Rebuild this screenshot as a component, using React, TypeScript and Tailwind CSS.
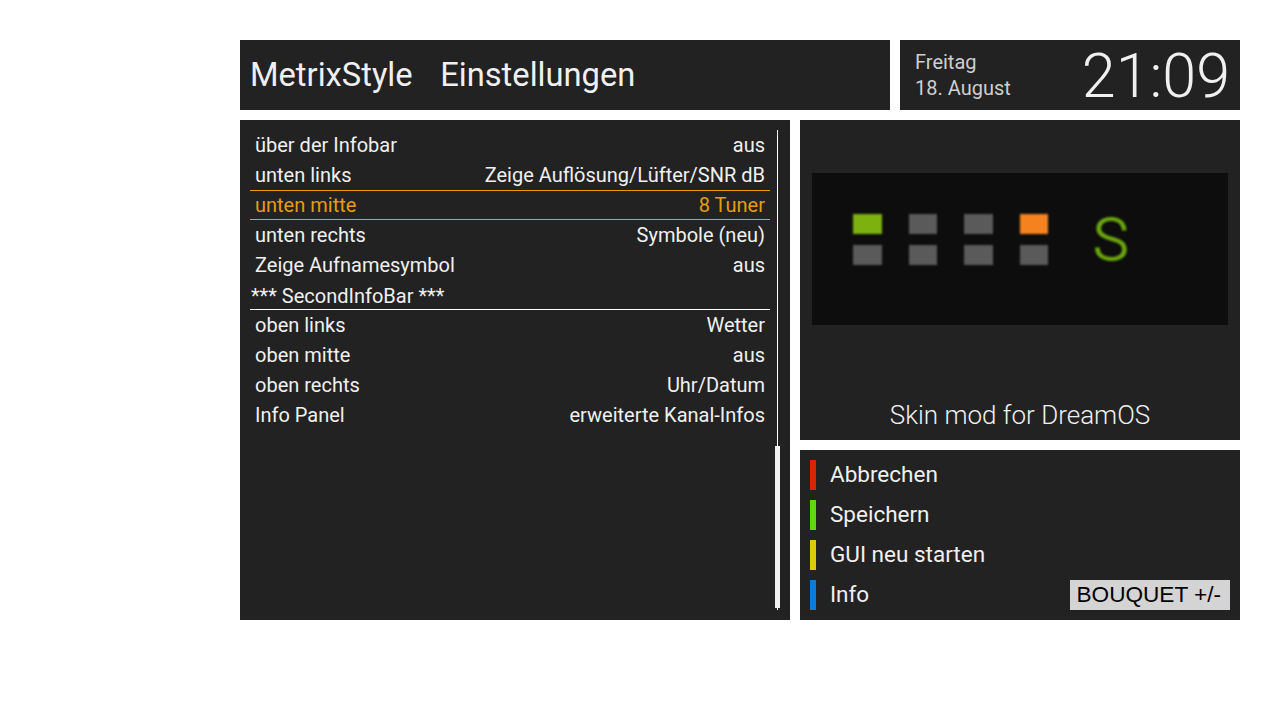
const ROWS: { label: string; value?: string; kind?: "selected" | "header" }[] = [
  { label: "über der Infobar", value: "aus" },
  { label: "unten links", value: "Zeige Auflösung/Lüfter/SNR dB" },
  { label: "unten mitte", value: "8 Tuner", kind: "selected" },
  { label: "unten rechts", value: "Symbole (neu)" },
  { label: "Zeige Aufnamesymbol", value: "aus" },
  { label: "*** SecondInfoBar ***", kind: "header" },
  { label: "oben links", value: "Wetter" },
  { label: "oben mitte", value: "aus" },
  { label: "oben rechts", value: "Uhr/Datum" },
  { label: "Info Panel", value: "erweiterte Kanal-Infos" },
];

const BUTTONS = [
  { color: "bg-[#dc2208]", label: "Abbrechen" },
  { color: "bg-[#62d80a]", label: "Speichern" },
  { color: "bg-[#dccc08]", label: "GUI neu starten" },
  { color: "bg-[#0c7cd8]", label: "Info" },
];

function Led({ color }: { color: string }) {
  return <div className={`h-[20px] w-[28.5px] blur-[1px] ${color}`} />;
}

export default function App() {
  return (
    <div className="flex h-[720px] w-[1280px] flex-col gap-[10px] bg-white pl-[240px] pr-[40px] pt-[40px] font-['Roboto',sans-serif] text-[#f0f0f0]">
      <div className="flex h-[70px] gap-[10px]">
        <div className="flex w-[650px] items-center gap-[27.5px] bg-[#222222] pl-[10px] pt-[2px] text-[32.7px] font-normal">
          <span>MetrixStyle</span>
          <span>Einstellungen</span>
        </div>
        <div className="flex w-[340px] items-center justify-between bg-[#222222] pl-[15px] pr-[10px]">
          <div className="text-[20px] leading-[26px] text-[#cfcfcf]">
            <div>Freitag</div>
            <div>18. August</div>
          </div>
          <div className="pt-[2px] text-[61px] font-light leading-none">21:09</div>
        </div>
      </div>

      <div className="flex gap-[10px]">
        <div className="flex h-[500px] w-[550px] bg-[#222222] pl-[10px] pr-[10px] pt-[10px]">
          <div className="w-[520px] shrink-0 text-[20px]">
            {ROWS.map((row) => {
              if (row.kind === "header") {
                return (
                  <div key={row.label} className="flex h-[30px] items-center border-b border-white pl-px pt-[2px]">
                    {row.label}
                  </div>
                );
              }
              const selected = row.kind === "selected";
              return (
                <div
                  key={row.label}
                  className={`flex h-[30px] items-center justify-between px-[5px] ${
                    selected ? "border-y border-y-[#e59d0e] text-[#e59d0e]" : ""
                  }`}
                >
                  <span>{row.label}</span>
                  <span>{row.value}</span>
                </div>
              );
            })}
          </div>
          <div className="ml-[5px] flex h-[480px] w-[5px] shrink-0 flex-col items-center">
            <div className="h-[316px] w-px bg-white" />
            <div className="h-[162px] w-[5px] bg-[#f0f0f0]" />
            <div className="h-[2px] w-px bg-white" />
          </div>
        </div>

        <div className="flex w-[440px] flex-col gap-[10px]">
          <div className="flex h-[320px] flex-col bg-[#222222]">
            <div className="ml-[12px] mt-[53px] flex h-[152px] w-[416px] bg-[#0d0d0d] pl-[41px] pt-[41px]">
              <div className="grid grid-cols-4 grid-rows-2 gap-x-[27px] gap-y-[10.7px] self-start">
                <Led color="bg-[#7cb10f]" />
                <Led color="bg-[#5a5a5a]" />
                <Led color="bg-[#5a5a5a]" />
                <Led color="bg-[#f5821e]" />
                <Led color="bg-[#5a5a5a]" />
                <Led color="bg-[#5a5a5a]" />
                <Led color="bg-[#5a5a5a]" />
                <Led color="bg-[#5a5a5a]" />
              </div>
              <span className="ml-[45px] mt-[-9px] h-fit text-[60px] font-light leading-[70px] text-[#6da80f] blur-[1px] [-webkit-text-stroke:1px_#6da80f]">S</span>
            </div>
            <div className="mt-[75px] text-center text-[26px] font-light leading-[30px]">Skin mod for DreamOS</div>
          </div>

          <div className="flex h-[170px] items-end justify-between bg-[#222222] pb-[10px] pl-[10px] pr-[10px]">
            <div className="flex flex-col gap-[10px]">
              {BUTTONS.map((b) => (
                <div key={b.label} className="flex h-[30px] items-center gap-[14px] text-[22.5px]">
                  <div className={`h-[30px] w-[6px] ${b.color}`} />
                  <span className="pb-[1px]">{b.label}</span>
                </div>
              ))}
            </div>
            <div className="flex h-[30px] w-[160px] items-center bg-[#d4d4d4] pl-[6.5px] font-['Liberation_Sans',sans-serif] text-[22.6px] leading-none text-black">
              BOUQUET +/-
            </div>
          </div>
        </div>
      </div>
    </div>
  );
}
